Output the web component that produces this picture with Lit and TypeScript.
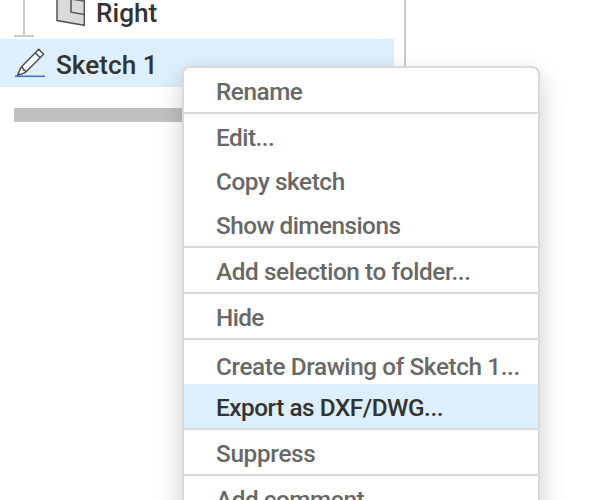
import { LitElement, html, css, svg } from "lit";
import { customElement } from "lit/decorators.js";
import { classMap } from "lit/directives/class-map.js";
import { styleMap } from "lit/directives/style-map.js";

interface MenuItem {
  label: string;
  tracking: number;
  divider?: boolean;
  active?: boolean;
  low?: boolean;
}

const ITEMS: MenuItem[] = [
  { label: "Rename", tracking: -0.45, divider: true },
  { label: "Edit...", tracking: -0.5 },
  { label: "Copy sketch", tracking: -0.42 },
  { label: "Show dimensions", tracking: -0.52, divider: true },
  { label: "Add selection to folder...", tracking: -0.39, divider: true },
  { label: "Hide", tracking: -0.6, divider: true },
  { label: "Create Drawing of Sketch 1...", tracking: -0.39, low: true },
  { label: "Export as DXF/DWG...", tracking: -0.46, active: true, divider: true },
  { label: "Suppress", tracking: -0.3, divider: true },
  { label: "Add comment...", tracking: -0.44 },
];

@customElement("context-menu")
class ContextMenu extends LitElement {
  static styles = css`
    :host {
      display: block;
      box-sizing: border-box;
      width: 358px;
      height: 520px;
      border: 2px solid #d9d9d9;
      border-radius: 8px;
      background: #fff;
      box-shadow: 0 10px 26px rgba(0, 0, 0, 0.2);
      overflow: hidden;
    }
    .item {
      height: 44px;
      padding-left: 32px;
      line-height: 48px;
      font-size: 24.3px;
      font-weight: 500;
      color: #686868;
      white-space: nowrap;
    }
    .divider {
      border-bottom: 2px solid #dadada;
    }
    .low {
      line-height: 54px;
    }
    .active {
      background: #ddeffc;
      color: #333;
    }
  `;

  render() {
    return ITEMS.map(
      (i) => html`<div
        class=${classMap({ item: true, divider: !!i.divider, active: !!i.active, low: !!i.low })}
        style=${styleMap({ letterSpacing: `${i.tracking}px` })}
      ><span>${i.label}</span></div>`
    );
  }
}

const planeIcon = svg`
  <path d="M57 -3 L84.3 1 V25.3 L57 20.6 Z" fill="#dadada" stroke="#555" stroke-width="1.5"/>
  <path d="M71 -2 V12.2 L84.3 14.4" fill="none" stroke="#555" stroke-width="1.5"/>`;

const pencilIcon = svg`
  <path d="M2.3 27.6 L6 19.3 L23.8 1.2 L28.6 6.3 L10.6 24.3 Z" fill="#f7fafc"/>
  <path d="M2.3 27.6 L6 19.3 L23.8 1.2 L28.6 6.3 L10.6 24.3 Z M6 19.3 L8 20 L8.3 22 L10.3 22.4 L10.6 24.3 M20.4 4.7 L25.2 9.7" fill="none" stroke="#4c4c4c" stroke-width="1.4" stroke-linejoin="round"/>
  <path d="M2 27.6 L3.4 24.5 L5.3 26.3 Z" fill="#4c4c4c"/>
  <path d="M0 28.3 H30" stroke="#4078c0" stroke-width="1.6"/>`;

@customElement("app-root")
class AppRoot extends LitElement {
  static styles = css`
    :host {
      display: block;
      position: relative;
      width: 590px;
      height: 500px;
      overflow: hidden;
      background: #fff;
      font-family: Roboto, "Liberation Sans", sans-serif;
    }
    .panel {
      box-sizing: border-box;
      width: 406px;
      height: 500px;
      border-right: 2px solid #ccc;
    }
    .row {
      display: flex;
      color: #333;
      font-size: 26.2px;
      font-weight: 500;
      white-space: nowrap;
    }
    .plane {
      height: 39px;
    }
    .plane .label {
      line-height: 27px;
    }
    .tree {
      display: block;
      width: 96px;
      height: 39px;
      flex: none;
    }
    .sketch {
      width: 394px;
      height: 48px;
      background: #ddeffc;
    }
    .sketch .label {
      line-height: 52px;
    }
    .pencil {
      display: block;
      width: 32px;
      height: 32px;
      margin: 9px 9px 0 15px;
      flex: none;
    }
    .rollback {
      width: 380px;
      height: 14px;
      margin: 21px 0 0 14px;
      background: #c1c1c1;
    }
    context-menu {
      position: absolute;
      left: 182px;
      top: 66px;
    }
  `;

  render() {
    return html`
      <div class="panel">
        <div class="row plane">
          <svg class="tree" viewBox="0 0 96 39">
            <path d="M24 0 V35 M14 36 H34" fill="none" stroke="#ccc" stroke-width="2" />
            ${planeIcon}
          </svg>
          <span class="label">Right</span>
        </div>
        <div class="row sketch">
          <svg class="pencil" viewBox="0 0 32 32">${pencilIcon}</svg>
          <span class="label">Sketch 1</span>
        </div>
        <div class="rollback"></div>
      </div>
      <context-menu></context-menu>
    `;
  }
}
